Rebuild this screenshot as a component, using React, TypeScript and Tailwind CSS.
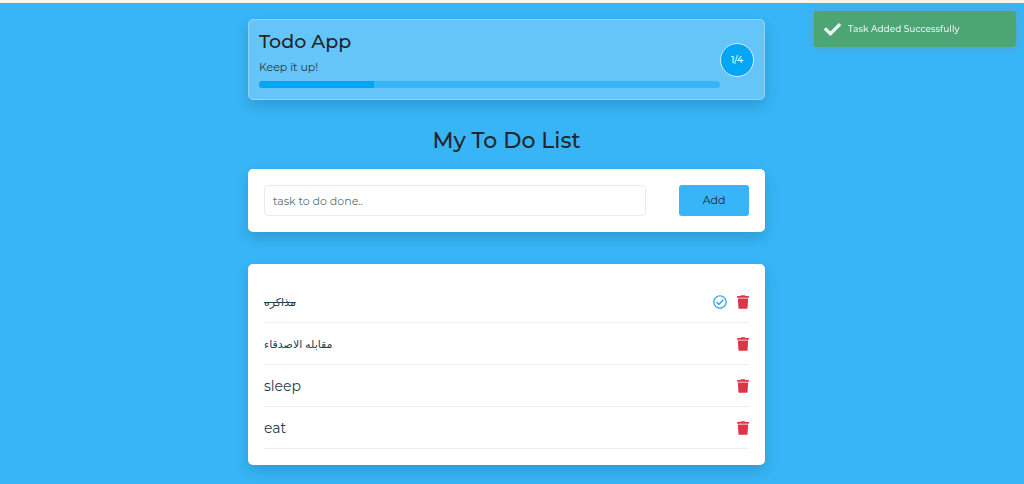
import { useState } from "react";
import type { FormEvent } from "react";
import { FaCheck, FaRegCheckCircle, FaTrash } from "react-icons/fa";

type Task = {
  id: number;
  title: string;
  completed: boolean;
};

const INITIAL_TASKS: Task[] = [
  { id: 1, title: "مذاكره", completed: true },
  { id: 2, title: "مقابله الاصدقاء", completed: false },
  { id: 3, title: "sleep", completed: false },
  { id: 4, title: "eat", completed: false },
];

const ARABIC = /[\u0600-\u06ff]/;

/* ── Progress card ────────────────────────────────────────────────────────── */
function ProgressCard({ done, total }: { done: number; total: number }) {
  const percent = total ? (done / total) * 100 : 0;

  return (
    <header className="flex items-center rounded-[5px] border border-[#93d3f8] bg-[#66c5f8] p-[10px] shadow-[0_6px_14px_rgba(0,0,0,0.15)]">
      <div className="flex-1">
        <h1 className="text-[19px] leading-6 font-medium text-[#212529]">Todo App</h1>
        <p className="mt-[3px] text-[11px] leading-5 text-[#213a47]">Keep it up!</p>
        <div
          role="progressbar"
          aria-label="Completed tasks"
          aria-valuenow={done}
          aria-valuemin={0}
          aria-valuemax={total}
          className="mt-1 mb-px h-[7px] overflow-hidden rounded-full bg-[#37b5f6]"
        >
          <div className="h-full bg-[#03a5f5]" style={{ width: `${percent}%` }} />
        </div>
      </div>
      <div className="flex size-[34px] shrink-0 items-center justify-center rounded-full border border-[#d3ecfb] bg-[#03a5f5] text-[9px] font-medium text-white">
        {done}/{total}
      </div>
    </header>
  );
}

/* ── Single task row ──────────────────────────────────────────────────────── */
type TaskRowProps = {
  task: Task;
  onToggle: (id: number) => void;
  onRemove: (id: number) => void;
};

function TaskRow({ task, onToggle, onRemove }: TaskRowProps) {
  return (
    <li className="flex h-[42px] items-center gap-[10px] border-b border-[#e8f1f4]">
      <button
        type="button"
        onClick={() => onToggle(task.id)}
        className={`mr-auto leading-5 text-[#24424f] ${ARABIC.test(task.title) ? "text-[11px]" : "text-[14px]"} ${
          task.completed ? "line-through" : ""
        }`}
      >
        {task.title}
      </button>
      {task.completed && <FaRegCheckCircle className="size-[14px] text-[#37a9e6]" aria-hidden="true" />}
      <button type="button" aria-label="Delete task" onClick={() => onRemove(task.id)}>
        <FaTrash className="h-[14px] w-3 text-[#dc3545]" />
      </button>
    </li>
  );
}

export default function App() {
  const [tasks, setTasks] = useState(INITIAL_TASKS);
  const [title, setTitle] = useState("");

  const done = tasks.filter((task) => task.completed).length;

  const addTask = (e: FormEvent) => {
    e.preventDefault();
    if (!title.trim()) return;
    setTasks([...tasks, { id: Date.now(), title: title.trim(), completed: false }]);
    setTitle("");
  };

  const toggleTask = (id: number) => {
    setTasks(tasks.map((task) => (task.id === id ? { ...task, completed: !task.completed } : task)));
  };

  const removeTask = (id: number) => {
    setTasks(tasks.filter((task) => task.id !== id));
  };

  return (
    <div className="min-h-screen border-t-[3px] border-[#fbf5e6] bg-[#37b5f6] font-[Montserrat,Inter,'DejaVu_Sans',sans-serif] text-[#212529]">
      <main className="mr-[11px] pt-4 pb-[18px]">
        <div className="mx-auto max-w-[517px]">
          <ProgressCard done={done} total={tasks.length} />

          <h2 className="mt-6 text-center text-[22px] leading-[33px] font-medium">My To Do List</h2>

          {/* New task form */}
          <form
            onSubmit={addTask}
            className="mt-3 flex gap-[33px] rounded-[5px] bg-white p-4 shadow-[0_6px_14px_rgba(0,0,0,0.15)]"
          >
            <input
              type="text"
              aria-label="New task"
              placeholder="task to do done.."
              value={title}
              onChange={(e) => setTitle(e.target.value)}
              className="h-[31px] min-w-0 flex-1 rounded-[4px] border border-[#e4eef1] px-2 text-[11px] placeholder:text-[#5d6d74]"
            />
            <button type="submit" className="h-[31px] w-[70px] rounded-[3px] bg-[#37b5f6] text-[11px]">
              Add
            </button>
          </form>

          {/* Task list */}
          <ul className="mt-8 rounded-[5px] bg-white p-4 pt-[17px] shadow-[0_6px_14px_rgba(0,0,0,0.15)]">
            {tasks.map((task) => (
              <TaskRow key={task.id} task={task} onToggle={toggleTask} onRemove={removeTask} />
            ))}
          </ul>
        </div>
      </main>

      {/* Toast */}
      <div
        role="status"
        className="fixed top-[11px] right-2 flex h-9 w-[202px] items-center gap-[7px] rounded-[2px] bg-[#4da574] pl-[10px] text-[9px] font-medium text-[#e3f3f4] shadow-[0_0_8px_rgba(130,150,170,0.7)]"
      >
        <FaCheck className="size-[17px] text-[#e9f8f6]" aria-hidden="true" />
        Task Added Successfully
      </div>
    </div>
  );
}
